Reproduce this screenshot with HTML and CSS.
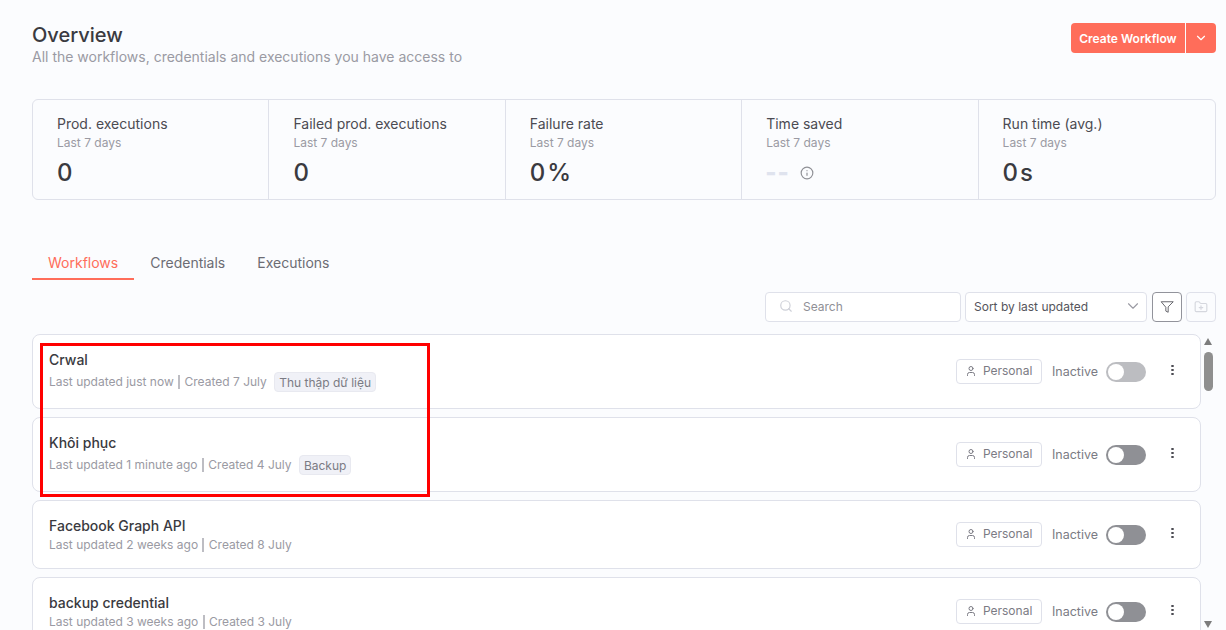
FILE: index.html
```html
<!DOCTYPE html>
<html lang="en">
<head>
<meta charset="utf-8">
<title>Overview</title>
<link rel="stylesheet" href="styles.css">
</head>
<body>
<main class="page">
  <header class="head">
    <div>
      <h1 class="title">Overview</h1>
      <p class="subtitle">All the workflows, credentials and executions you have access to</p>
    </div>
    <div class="create">
      <button class="create-main">Create Workflow</button>
      <button class="create-more" aria-label="More">
        <svg width="14" height="14" viewBox="0 0 24 24" class="ico"><path d="m6 9 6 6 6-6"/></svg>
      </button>
    </div>
  </header>

  <section class="stats">
    <div class="stat"><div class="stat-name">Prod. executions</div><div class="stat-sub">Last 7 days</div><div class="stat-val">0</div></div>
    <div class="stat"><div class="stat-name">Failed prod. executions</div><div class="stat-sub">Last 7 days</div><div class="stat-val">0</div></div>
    <div class="stat"><div class="stat-name">Failure rate</div><div class="stat-sub">Last 7 days</div><div class="stat-val">0<span class="unit">%</span></div></div>
    <div class="stat"><div class="stat-name">Time saved</div><div class="stat-sub">Last 7 days</div>
      <div class="stat-val"><span class="dashes">--</span>
        <svg width="14" height="14" viewBox="0 0 24 24" class="ico info"><circle cx="12" cy="12" r="10"/><path d="M12 16v-4M12 8h.01"/></svg>
      </div></div>
    <div class="stat"><div class="stat-name">Run time (avg.)</div><div class="stat-sub">Last 7 days</div><div class="stat-val">0<span class="unit">s</span></div></div>
  </section>

  <nav class="tabs">
    <a class="tab active">Workflows</a>
    <a class="tab">Credentials</a>
    <a class="tab">Executions</a>
  </nav>

  <div class="toolbar">
    <label class="search">
      <svg width="14" height="14" viewBox="0 0 24 24" class="ico"><circle cx="11" cy="11" r="8"/><path d="m21 21-4.3-4.3"/></svg>
      <span>Search</span>
    </label>
    <div class="sort">
      <span>Sort by last updated</span>
      <svg width="18" height="18" viewBox="0 0 24 24" class="ico thin"><path d="m6 9 6 6 6-6"/></svg>
    </div>
    <button class="tool filter" aria-label="Filter">
      <svg width="14" height="14" viewBox="0 0 24 24" class="ico thin"><path d="M22 3H2l8 9.46V19l4 2v-8.54z"/></svg>
    </button>
    <button class="tool folder" aria-label="New folder">
      <svg width="14" height="14" viewBox="0 0 24 24" class="ico"><path d="M12 10v6M9 13h6M20 20a2 2 0 0 0 2-2V8a2 2 0 0 0-2-2h-7.9a2 2 0 0 1-1.69-.9L9.6 3.9A2 2 0 0 0 7.93 3H4a2 2 0 0 0-2 2v13a2 2 0 0 0 2 2Z"/></svg>
    </button>
  </div>

  <div class="scroller">
    <ul class="list">
      <li class="card">
        <div class="info-col">
          <div class="name">Crwal</div>
          <div class="meta tagged">Last updated just now <i class="sep"></i> Created 7 July <span class="tag">Thu thập dữ liệu</span></div>
        </div>
        <div class="actions">
          <span class="badge"><svg width="12" height="12" viewBox="0 0 24 24" class="ico"><path d="M19 21v-2a4 4 0 0 0-4-4H9a4 4 0 0 0-4 4v2"/><circle cx="12" cy="7" r="4"/></svg>Personal</span>
          <span class="state">Inactive</span>
          <span class="toggle light"></span>
          <span class="dots"><b></b><b></b><b></b></span>
        </div>
      </li>
      <li class="card">
        <div class="info-col">
          <div class="name">Khôi phục</div>
          <div class="meta tagged">Last updated 1 minute ago <i class="sep"></i> Created 4 July <span class="tag">Backup</span></div>
        </div>
        <div class="actions">
          <span class="badge"><svg width="12" height="12" viewBox="0 0 24 24" class="ico"><path d="M19 21v-2a4 4 0 0 0-4-4H9a4 4 0 0 0-4 4v2"/><circle cx="12" cy="7" r="4"/></svg>Personal</span>
          <span class="state">Inactive</span>
          <span class="toggle"></span>
          <span class="dots"><b></b><b></b><b></b></span>
        </div>
      </li>
      <li class="card">
        <div class="info-col">
          <div class="name">Facebook Graph API</div>
          <div class="meta">Last updated 2 weeks ago <i class="sep"></i> Created 8 July</div>
        </div>
        <div class="actions">
          <span class="badge"><svg width="12" height="12" viewBox="0 0 24 24" class="ico"><path d="M19 21v-2a4 4 0 0 0-4-4H9a4 4 0 0 0-4 4v2"/><circle cx="12" cy="7" r="4"/></svg>Personal</span>
          <span class="state">Inactive</span>
          <span class="toggle"></span>
          <span class="dots"><b></b><b></b><b></b></span>
        </div>
      </li>
      <li class="card">
        <div class="info-col">
          <div class="name">backup credential</div>
          <div class="meta">Last updated 3 weeks ago <i class="sep"></i> Created 3 July</div>
        </div>
        <div class="actions">
          <span class="badge"><svg width="12" height="12" viewBox="0 0 24 24" class="ico"><path d="M19 21v-2a4 4 0 0 0-4-4H9a4 4 0 0 0-4 4v2"/><circle cx="12" cy="7" r="4"/></svg>Personal</span>
          <span class="state">Inactive</span>
          <span class="toggle"></span>
          <span class="dots"><b></b><b></b><b></b></span>
        </div>
      </li>
    </ul>
    <div class="scrollbar">
      <i class="arrow up"></i>
      <i class="thumb"></i>
      <i class="arrow down"></i>
    </div>
  </div>

  <div class="highlight"></div>
</main>
</body>
</html>
```

FILE: styles.css
```css
* { box-sizing: border-box; }
html, body { margin: 0; height: 100%; overflow: hidden; }
body {
  background: #fbfcfe;
  color: #3b3b40;
  font-family: Inter, "Noto Sans", sans-serif;
  font-size: 14px;
}
.page {
  position: relative;
  height: 630px;
  padding: 23px 10px 0 32px;
  overflow: hidden;
}
button { font-family: inherit; padding: 0; cursor: pointer; }
.ico {
  fill: none;
  stroke: currentColor;
  stroke-width: 2;
  stroke-linecap: round;
  stroke-linejoin: round;
  flex: none;
}
.ico.thin { stroke-width: 1.5; }

/* header */
.head { display: flex; justify-content: space-between; align-items: flex-start; height: 76px; }
.title { margin: 0; font-size: 20px; line-height: 24px; font-weight: 500; color: #3a3a40; }
.subtitle { margin: 1px 0 0; font-size: 14px; line-height: 18px; color: #9a9aa3; }
.create { display: flex; height: 30px; color: #fff; }
.create button { border: 0; background: #ff6d5a; color: #fff; }
.create-main { width: 114px; font-size: 12px; font-weight: 600; border-radius: 4px 0 0 4px; }
.create-more { width: 30px; margin-left: 1px; border-radius: 0 4px 4px 0; display: flex; align-items: center; justify-content: center; }

/* stats */
.stats {
  display: grid;
  grid-template-columns: repeat(5, 1fr);
  height: 101px;
  border: 1px solid #dfe1ea;
  border-radius: 6px;
}
.stat { padding: 15px 24px 0; border-right: 1px solid #dfe1ea; }
.stat:last-child { border-right: 0; }
.stat-name { font-size: 14px; line-height: 17px; color: #4b4b52; }
.stat-sub { font-size: 12px; line-height: 15px; margin-top: 3px; color: #9a9aa3; }
.stat-val { display: flex; align-items: center; font-size: 24px; line-height: 29px; margin-top: 8px; font-weight: 500; color: #3a3a40; }
.unit { margin-left: 2px; }
.dashes { color: #dfe3ee; letter-spacing: 1px; width: 35px; margin-left: -1px; font-weight: 800; }
.info { color: #8f9096; }

/* tabs */
.tabs { display: flex; margin-top: 52px; height: 28px; padding-top: 1px; }
.tab { padding: 0 16px; line-height: 20px; color: #6c6c74; }
.tab.active { color: #ff6d5a; border-bottom: 2px solid #ff6d5a; }

/* toolbar */
.toolbar { display: flex; justify-content: flex-end; margin-top: 12px; height: 30px; }
.search, .sort, .tool { border: 1px solid #dfe1ea; border-radius: 4px; background: #fff; }
.search { width: 196px; display: flex; align-items: center; padding: 0 0 2px 13px; gap: 10px; font-size: 12px; color: #8f9096; }
.search .ico { color: #ced0d8; }
.sort { width: 182px; margin-left: 4px; display: flex; align-items: center; justify-content: space-between; padding: 0 4px 2px 8px; font-size: 12px; color: #55555c; }
.sort .ico { color: #9a9aa3; }
.tool { width: 30px; margin-left: 4px; display: flex; align-items: center; justify-content: center; }
.filter { margin-left: 5px; border-color: #92939b; color: #55555c; }
.folder { background: transparent; color: #d5d7de; }

/* list */
.scroller { display: flex; margin-top: 12px; }
.list { flex: 1; margin: 0; padding: 0; list-style: none; display: flex; flex-direction: column; gap: 8px; }
.card {
  display: flex;
  align-items: center;
  justify-content: space-between;
  padding: 16px;
  background: #fff;
  border: 1px solid #dfe1ea;
  border-radius: 8px;
}
.name { font-size: 14px; line-height: 18px; font-weight: 500; color: #3a3a40; }
.meta { display: flex; align-items: center; height: 17px; padding-top: 2px; font-size: 12px; color: #9a9aa3; white-space: pre; }
.meta.tagged { height: 23px; }
.sep { width: 2px; height: 14px; margin: 0 1px; background: #bdbdc3; }
.tag {
  margin: 1px 0 0 4px;
  height: 20px;
  line-height: 18px;
  padding: 1px 4px 0;
  background: #f0f1f7;
  border: 1px solid #e8e9f0;
  border-radius: 4px;
  color: #7b7b84;
}
.actions { display: flex; align-items: center; font-size: 12px; color: #7b7b84; }
.badge {
  display: flex;
  align-items: center;
  gap: 6px;
  width: 86px;
  height: 25px;
  padding: 0 0 2px 8px;
  border: 1px solid #dfe1ea;
  border-radius: 4px;
}
.state { margin-left: 10px; font-size: 12.5px; }
.toggle { position: relative; width: 40px; height: 20px; margin-left: 8px; border-radius: 10px; background: #8f9095; }
.toggle.light { background: #bcbdc1; }
.toggle::after { content: ""; position: absolute; top: 2px; left: 2px; width: 16px; height: 16px; border-radius: 50%; background: #fff; }
.dots { display: flex; flex-direction: column; gap: 1.5px; width: 3px; margin: -3px 10px 0 25px; }
.dots b { width: 3px; height: 2.5px; border-radius: 50%; background: #4b4b52; }

/* scrollbar */
.scrollbar { width: 15px; position: relative; flex: none; height: 296px; }
.scrollbar .thumb { position: absolute; left: 3px; top: 18px; width: 9px; height: 39px; border-radius: 5px; background: #8f8f8f; }
.arrow { position: absolute; left: 3px; width: 0; height: 0; border-left: 4.5px solid transparent; border-right: 4.5px solid transparent; }
.arrow.up { top: 4px; border-bottom: 7px solid #7c7c7c; }
.arrow.down { top: 287px; border-top: 7px solid #7c7c7c; }

/* annotation */
.highlight { position: absolute; left: 40px; top: 343px; width: 390px; height: 154px; border: 3px solid #ff0000; pointer-events: none; }
```
